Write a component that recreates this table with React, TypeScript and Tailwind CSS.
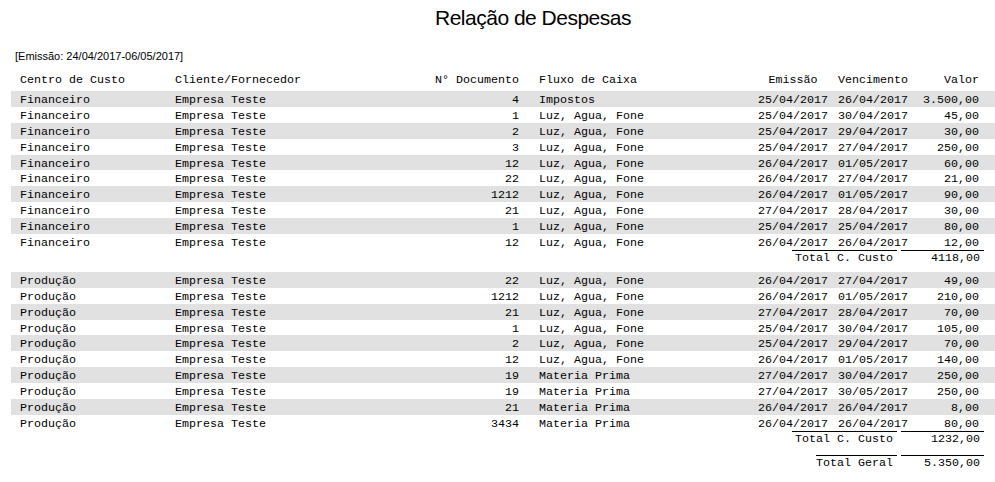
import React from 'react';

type Row = [string, string, string, string, string, string, string];

const mono = { fontFamily: '"Liberation Mono", "Courier New", monospace' };

const LUZ = 'Luz, Agua, Fone';
const MAT = 'Materia Prima';

const financeiro: Row[] = [
  ['Financeiro', 'Empresa Teste', '4', 'Impostos', '25/04/2017', '26/04/2017', '3.500,00'],
  ['Financeiro', 'Empresa Teste', '1', LUZ, '25/04/2017', '30/04/2017', '45,00'],
  ['Financeiro', 'Empresa Teste', '2', LUZ, '25/04/2017', '29/04/2017', '30,00'],
  ['Financeiro', 'Empresa Teste', '3', LUZ, '25/04/2017', '27/04/2017', '250,00'],
  ['Financeiro', 'Empresa Teste', '12', LUZ, '26/04/2017', '01/05/2017', '60,00'],
  ['Financeiro', 'Empresa Teste', '22', LUZ, '26/04/2017', '27/04/2017', '21,00'],
  ['Financeiro', 'Empresa Teste', '1212', LUZ, '26/04/2017', '01/05/2017', '90,00'],
  ['Financeiro', 'Empresa Teste', '21', LUZ, '27/04/2017', '28/04/2017', '30,00'],
  ['Financeiro', 'Empresa Teste', '1', LUZ, '25/04/2017', '25/04/2017', '80,00'],
  ['Financeiro', 'Empresa Teste', '12', LUZ, '26/04/2017', '26/04/2017', '12,00'],
];

const producao: Row[] = [
  ['Produção', 'Empresa Teste', '22', LUZ, '26/04/2017', '27/04/2017', '49,00'],
  ['Produção', 'Empresa Teste', '1212', LUZ, '26/04/2017', '01/05/2017', '210,00'],
  ['Produção', 'Empresa Teste', '21', LUZ, '27/04/2017', '28/04/2017', '70,00'],
  ['Produção', 'Empresa Teste', '1', LUZ, '25/04/2017', '30/04/2017', '105,00'],
  ['Produção', 'Empresa Teste', '2', LUZ, '25/04/2017', '29/04/2017', '70,00'],
  ['Produção', 'Empresa Teste', '12', LUZ, '26/04/2017', '01/05/2017', '140,00'],
  ['Produção', 'Empresa Teste', '19', MAT, '27/04/2017', '30/04/2017', '250,00'],
  ['Produção', 'Empresa Teste', '19', MAT, '27/04/2017', '30/05/2017', '250,00'],
  ['Produção', 'Empresa Teste', '21', MAT, '26/04/2017', '26/04/2017', '8,00'],
  ['Produção', 'Empresa Teste', '3434', MAT, '26/04/2017', '26/04/2017', '80,00'],
];

function Cells({ r }: { r: Row }) {
  return (
    <>
      <div className="w-[155px] shrink-0 whitespace-pre">{r[0]}</div>
      <div className="w-[224px] shrink-0 whitespace-pre">{r[1]}</div>
      <div className="w-[120px] shrink-0 text-right whitespace-pre">{r[2]}</div>
      <div className="w-[239px] shrink-0 pl-[20px] whitespace-pre">{r[3]}</div>
      <div className="w-[70px] shrink-0 text-center whitespace-pre">{r[4]}</div>
      <div className="w-[80px] shrink-0 pl-[10px] text-center whitespace-pre">{r[5]}</div>
      <div className="w-[71px] shrink-0 text-right whitespace-pre">{r[6]}</div>
    </>
  );
}

function Group({ rows }: { rows: Row[] }) {
  return (
    <div className="flex flex-col">
      {rows.map((r, i) => (
        <div
          key={i}
          className={`flex h-[15.9px] pl-[9px] leading-[15.9px] pt-[2px] ${i % 2 === 0 ? 'bg-[#e1e1e1]' : ''}`}
        >
          <Cells r={r} />
        </div>
      ))}
    </div>
  );
}

function Total({ label, value, labelW }: { label: string; value: string; labelW: string }) {
  return (
    <div className="flex justify-end pr-[11px] h-[16px] leading-[15px]">
      <div className={`${labelW} border-t border-black text-right pr-[4px] whitespace-pre`}>{label}</div>
      <div className="w-[83px] ml-[4px] border-t border-black text-right pr-[4px] whitespace-pre">{value}</div>
    </div>
  );
}

export default function App() {
  return (
    <div className="w-[995px] h-[482px] bg-white text-black overflow-hidden">
      <div
        className="pl-[71px] pt-[2px] h-[44px] text-center text-[21px] tracking-[-0.5px]"
        style={{ fontFamily: '"Liberation Sans", Arial, sans-serif' }}
      >
        Relação de Despesas
      </div>
      <div
        className="pl-[15px] h-[24px] text-[11px] leading-[24px]"
        style={{ fontFamily: '"Liberation Sans", Arial, sans-serif' }}
      >
        [Emissão: 24/04/2017-06/05/2017]
      </div>
      <div className="text-[11.67px]" style={mono}>
        <div className="flex h-[16px] pl-[20px] mt-[3px] mb-[4px] pt-[1px] leading-[16px]">
          <Cells r={['Centro de Custo', 'Cliente/Fornecedor', 'N° Documento', 'Fluxo de Caixa', 'Emissão', 'Vencimento', 'Valor']} />
        </div>
        <div className="pl-[11px]">
          <Group rows={financeiro} />
        </div>
        <Total label="Total C. Custo" value="4118,00" labelW="w-[105px]" />
        <div className="pl-[11px] mt-[6px]">
          <Group rows={producao} />
        </div>
        <Total label="Total C. Custo" value="1232,00" labelW="w-[105px]" />
        <div className="mt-[8px]">
          <Total label="Total Geral" value="5.350,00" labelW="w-[81px]" />
        </div>
      </div>
    </div>
  );
}
